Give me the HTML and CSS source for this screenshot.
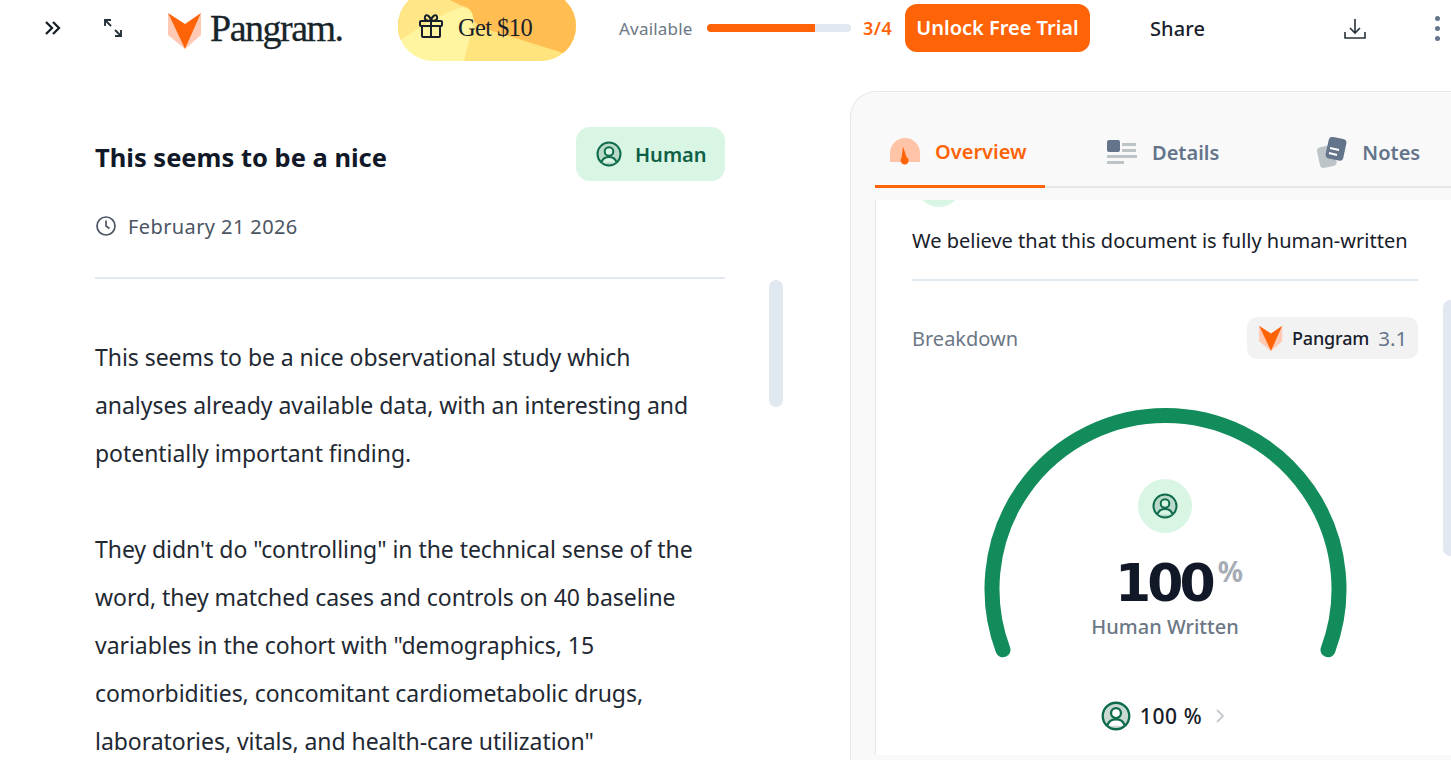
FILE: index.html
```html
<!DOCTYPE html>
<html lang="en">
    <head>
        <meta charset="UTF-8" />
        <meta name="viewport" content="width=device-width, initial-scale=1.0" />
        <title>Pangram</title>
        <link rel="stylesheet" href="styles.css">
    </head>
    <body>
        <header class="topbar">
            <svg class="icon-collapse" width="18" height="18" viewBox="0 0 18 18" fill="none" stroke="#17202a" stroke-width="2.300"><path d="M2 3l6 6-6 6M9 3l6 6-6 6"/></svg>
            <svg class="icon-expand" width="20" height="20" viewBox="0 0 20 20" fill="none" stroke="#26323a" stroke-width="1.900"><path d="M2 8V2h6M2 2l6 6M18 12v6h-6M18 18l-6-6"/></svg>
            <a class="logo">
                <svg width="34" height="37" viewBox="0 0 34 37"><path d="M0 1v22l17 14z" fill="#ffc9b3"/><path d="M33 1v22L17 37z" fill="#ffc9b3"/><path d="M0 1l17 11L33 1 17 37z" fill="#ff6308"/></svg>
                <span class="logo-name">Pangram.</span>
            </a>
            <a class="gift">
                <svg class="gift-bg" width="178" height="70" viewBox="0 0 178 70"><rect width="178" height="70" fill="#fff4a0"/><path d="M66 70L76 30Q76 16 60 16Q50 16 0 50V0H178V70z" fill="#ffe47d"/><path d="M0 50Q50 16 60 15Q74 13 76 30L82 36 178 66V0H0z" fill="#ffbd52"/><path d="M0 50V20Q4 5 20 0H34L66 16Q50 18 0 50z" fill="#ffe788"/></svg>
                <svg class="gift-icon" width="26" height="26" viewBox="0 0 26 26" fill="none" stroke="#17202a" stroke-width="2"><rect x="2" y="8" width="22" height="5" rx="1"/><path d="M4 13v10a1 1 0 0 0 1 1h16a1 1 0 0 0 1-1V13M13 8v16M13 8C8 8 6 6 7 3.500S12 2 13 8zM13 8c5 0 7-2 6-4.500S14 2 13 8z"/></svg>
                <span>Get $10</span>
            </a>
            <span class="avail-label">Available</span>
            <div class="avail-bar"><div class="avail-fill" style="width: 75%"></div></div>
            <span class="avail-count">3/4</span>
            <button class="unlock">Unlock Free Trial</button>
            <span class="share">Share</span>
            <svg class="icon-download" width="24" height="24" viewBox="0 0 24 24" fill="none" stroke="#26323a" stroke-width="1.600"><path d="M12 2v14M7 11l5 5 5-5M2 15v6h20v-6"/></svg>
            <div class="dots"><i></i><i></i><i></i></div>
        </header>

        <main class="content">
            <section class="doc">
                <div class="doc-head">
                    <h1>This seems to be a nice</h1>
                    <div class="verdict">
                        <svg width="26" height="26" viewBox="0 0 26 26" fill="none" stroke="#0d6b4b" stroke-width="2"><circle cx="13" cy="13" r="11.500" fill="#b9d9c9"/><circle cx="13" cy="10.500" r="4.300" fill="#d9f5e4"/><path d="M5.500 21.500c1-4 4-5.500 7.500-5.500s6.500 1.500 7.500 5.500" fill="#d9f5e4"/></svg>
                        <span>Human</span>
                    </div>
                </div>
                <div class="doc-date">
                    <svg width="22" height="22" viewBox="0 0 22 22" fill="none" stroke="#4b5563" stroke-width="1.700"><circle cx="11" cy="11" r="9"/><path d="M11 5.500V11l3.500 2.500"/></svg>
                    <span>February 21 2026</span>
                </div>
                <div class="doc-rule"></div>
                <div class="doc-text">
                    <p>This seems to be a nice observational study which<br>analyses already available data, with an interesting and<br>potentially important finding.</p>
                    <p>They didn't do "controlling" in the technical sense of the<br>word, they matched cases and controls on 40 baseline<br>variables in the cohort with "demographics, 15<br>comorbidities, concomitant cardiometabolic drugs,<br>laboratories, vitals, and health-care utilization"</p>
                </div>
                <div class="doc-thumb"></div>
            </section>

            <aside class="panel">
                <nav class="tabs">
                    <a class="tab tab-on">
                        <svg width="30" height="28" viewBox="0 0 30 28"><path d="M0 24V15a15 15 0 0 1 30 0v9z" fill="#ffc4a8"/><path d="M13 8.500l3.500 10.500a4 4 0 1 1-5 1z" fill="#ff6308"/></svg>
                        <span>Overview</span>
                    </a>
                    <a class="tab tab-details">
                        <svg width="30" height="25" viewBox="0 0 30 25"><rect width="13" height="12" y="0" rx="2" fill="#64748b"/><path d="M15 3h14v3H15zM15 9h14v3H15zM0 15h30v3H0z" fill="#bcc4c8"/><rect y="21" width="17" height="3" fill="#bcc4c8"/></svg>
                        <span>Details</span>
                    </a>
                    <a class="tab tab-notes">
                        <svg width="30" height="31" viewBox="0 0 30 31"><rect x="1" y="9" width="17" height="21" rx="4" fill="#bcc4c8" transform="rotate(-12 10 18)"/><rect x="10" y="1" width="18" height="22" rx="4" fill="#64748b" transform="rotate(12 20 12)"/><path d="M13 11l9 2M12 16l8 2" stroke="#fff" stroke-width="2"/></svg>
                        <span>Notes</span>
                    </a>
                </nav>
                <div class="card">
                    <div class="card-peek"></div>
                    <p class="card-lead">We believe that this document is fully human-written</p>
                    <div class="card-rule"></div>
                    <div class="breakdown">
                        <span class="breakdown-label">Breakdown</span>
                        <div class="model-chip">
                            <svg width="24" height="26" viewBox="0 0 34 37"><path d="M0 1v22l17 14z" fill="#ffc9b3"/><path d="M33 1v22L17 37z" fill="#ffc9b3"/><path d="M0 1l17 11L33 1 17 37z" fill="#ff6308"/></svg>
                            <span class="model-name">Pangram</span>
                            <span class="model-ver">3.1</span>
                        </div>
                    </div>
                    <div class="gauge">
                        <svg class="gauge-arc" width="364" height="252" viewBox="0 0 364 252" fill="none"><path d="M20 241.800A173.500 173.500 0 1 1 345 241.800" stroke="#128c5b" stroke-width="15" stroke-linecap="round"/></svg>
                        <div class="gauge-mid">
                            <div class="gauge-badge">
                                <svg width="26" height="26" viewBox="0 0 26 26" fill="none" stroke="#0d6b4b" stroke-width="2"><circle cx="13" cy="13" r="11.500" fill="#b9d9c9"/><circle cx="13" cy="10.500" r="4.300" fill="#d9f5e4"/><path d="M5.500 21.500c1-4 4-5.500 7.500-5.500s6.500 1.500 7.500 5.500" fill="#d9f5e4"/></svg>
                            </div>
                            <div class="gauge-num">100<sup>%</sup></div>
                            <div class="gauge-cap">Human Written</div>
                        </div>
                    </div>
                    <div class="score-row">
                        <svg width="30" height="30" viewBox="0 0 26 26" fill="none" stroke="#0d6b4b" stroke-width="2"><circle cx="13" cy="13" r="11.500" fill="#c9d9d2"/><circle cx="13" cy="10.500" r="4.300" fill="#fff"/><path d="M5.500 21.500c1-4 4-5.500 7.500-5.500s6.500 1.500 7.500 5.500" fill="#fff"/></svg>
                        <span class="score-val">100 %</span>
                        <svg width="12" height="16" viewBox="0 0 12 16" fill="none" stroke="#c4c9ce" stroke-width="1.800"><path d="M3 2l6 6-6 6"/></svg>
                    </div>
                </div>
                <div class="panel-thumb"></div>
            </aside>
        </main>
    </body>
</html>
```

FILE: styles.css
```css
html, body {
    margin: 0;
    height: 760px;
    overflow: hidden;
    background: #fff;
}
body {
    font-family: "Noto Sans", "Open Sans", sans-serif;
    color: #17202a;
}

/* top bar */
.topbar {
    display: flex;
    align-items: center;
    height: 61px;
    padding-bottom: 5px;
    box-sizing: border-box;
}
.icon-collapse {
    margin-left: 44px;
}
.icon-expand {
    margin-left: 41px;
}
.logo {
    display: flex;
    align-items: center;
    margin-left: 45px;
    margin-top: 5px;
    width: 230px;
}
.logo-name {
    font-family: "Liberation Serif", serif;
    font-size: 38px;
    letter-spacing: -1.500px;
    margin-left: 8px;
    margin-top: -6px;
    color: #17252a;
    -webkit-text-stroke: 0.3px #17252a;
}
.gift {
    position: relative;
    display: flex;
    align-items: center;
    align-self: flex-end;
    width: 178px;
    height: 70px;
    margin-bottom: -5px;
    border-radius: 35px;
    overflow: hidden;
    font-family: "Liberation Serif", serif;
    font-size: 24.500px;
    letter-spacing: -0.600px;
}
.gift-bg {
    position: absolute;
    left: 0;
    top: 0;
}
.gift-icon, .gift span {
    position: relative;
}
.gift-icon {
    margin-left: 20px;
}
.gift span {
    margin-left: 14px;
    margin-top: 3px;
}
.avail-label {
    margin-left: 43px;
    font-size: 17px;
    letter-spacing: 0.200px;
    color: #6b7785;
    width: 88px;
}
.avail-bar {
    width: 144px;
    height: 8px;
    border-radius: 4px;
    background: #e2e8f0;
    overflow: hidden;
}
.avail-fill {
    height: 100%;
    background: #ff6308;
}
.avail-count {
    margin-left: 12px;
    font-size: 18px;
    letter-spacing: 0.500px;
    font-weight: 600;
    color: #ff6308;
    width: 42px;
}
.unlock {
    width: 185px;
    height: 48px;
    margin-top: -1px;
    border: 0;
    border-radius: 12px;
    background: #ff6308;
    color: #fff;
    font-family: inherit;
    font-size: 20px;
    font-weight: 600;
    white-space: nowrap;
    padding: 0;
}
.share {
    margin-left: 60px;
    font-size: 20px;
    letter-spacing: 0.100px;
    font-weight: 500;
    width: 193px;
}
.icon-download {
    margin-top: 1px;
}
.dots {
    display: flex;
    flex-direction: column;
    gap: 5px;
    margin-left: 68px;
}
.dots i {
    width: 5px;
    height: 5px;
    border-radius: 50%;
    background: #64748b;
}

/* layout */
.content {
    display: flex;
    align-items: flex-start;
    height: 699px;
    overflow: hidden;
}

/* document */
.doc {
    position: relative;
    width: 630px;
    margin-left: 95px;
    padding-top: 66px;
}
.doc-head {
    display: flex;
    justify-content: space-between;
    align-items: center;
}
.doc-head h1 {
    margin: 5px 0 0;
    font-size: 25.500px;
    font-weight: 700;
    color: #111827;
}
.verdict {
    display: flex;
    align-items: center;
    gap: 13px;
    width: 149px;
    height: 54px;
    box-sizing: border-box;
    padding-left: 20px;
    border-radius: 14px;
    background: #d9f5e4;
    color: #0d5f45;
    font-size: 20px;
    font-weight: 600;
}
.doc-date {
    display: flex;
    align-items: center;
    gap: 11px;
    margin-top: 32px;
    height: 26px;
    font-size: 20px;
    letter-spacing: 0.400px;
    color: #4b5563;
}
.doc-rule {
    height: 2px;
    margin-top: 38px;
    background: #e2e8f0;
}
.doc-text {
    padding-top: 54px;
    font-size: 23px;
    letter-spacing: -0.050px;
    line-height: 48px;
    color: #1f2933;
    white-space: nowrap;
}
.doc-text p {
    margin: 0 0 48px;
}
.doc-thumb {
    position: absolute;
    left: 674px;
    top: 219px;
    width: 14px;
    height: 127px;
    border-radius: 7px;
    background: #e2e8f0;
}

/* right panel */
.panel {
    position: relative;
    flex: 1;
    height: 700px;
    margin-top: 30px;
    margin-left: 125px;
    box-sizing: border-box;
    padding-left: 24px;
    border: 1px solid #e5e7eb;
    border-right: 0;
    border-radius: 26px 0 0 0;
    background: #f9f9f9;
    overflow: hidden;
}
.tabs {
    display: flex;
    height: 96px;
    border-bottom: 2px solid #e5e7eb;
    box-sizing: border-box;
    white-space: nowrap;
}
.tab {
    display: flex;
    align-items: center;
    gap: 15px;
    height: 96px;
    box-sizing: border-box;
    padding-top: 26px;
    padding-bottom: 1px;
    font-size: 20px;
    font-weight: 600;
    color: #64748b;
}
.tab-on {
    width: 170px;
    padding-left: 15px;
    padding-bottom: 0;
    color: #ff6308;
    border-bottom: 3px solid #ff6308;
}
.tab-details {
    margin-left: 62px;
}
.tab-notes {
    margin-left: 98px;
}
.card {
    height: 555px;
    margin-top: 12px;
    border-left: 1px solid #e5e7eb;
    background: #fff;
    overflow: hidden;
    box-sizing: border-box;
    padding-left: 36px;
    width: 576px;
    position: relative;
}
.card-peek {
    position: absolute;
    left: 40px;
    top: -39px;
    width: 46px;
    height: 46px;
    border-radius: 50%;
    background: #d9f5e4;
}
.card-lead {
    margin: 25px 0 0;
    height: 32px;
    font-size: 20px;
    line-height: 32px;
    white-space: nowrap;
}
.card-rule {
    width: 506px;
    height: 2px;
    margin-top: 22px;
    background: #e2e8f0;
}
.breakdown {
    display: flex;
    justify-content: space-between;
    align-items: center;
    width: 506px;
    margin-top: 36px;
}
.breakdown-label {
    font-size: 20px;
    color: #6b7785;
}
.model-chip {
    display: flex;
    align-items: center;
    gap: 9px;
    width: 171px;
    height: 42px;
    box-sizing: border-box;
    padding-left: 12px;
    border-radius: 10px;
    background: #f2f2f2;
}
.model-name {
    font-size: 18px;
    letter-spacing: -0.150px;
    font-weight: 500;
}
.model-ver {
    font-size: 20.500px;
    color: #64748b;
}
.gauge {
    position: relative;
    width: 364px;
    height: 252px;
    margin-top: 49px;
    margin-left: 71px;
}
.gauge-arc {
    position: absolute;
    left: 0;
    top: 0;
}
.gauge-mid {
    display: flex;
    flex-direction: column;
    align-items: center;
    padding-top: 71px;
}
.gauge-badge {
    display: flex;
    align-items: center;
    justify-content: center;
    width: 54px;
    height: 54px;
    border-radius: 50%;
    background: #d9f5e4;
}
.gauge-num {
    margin-top: 21px;
    height: 56px;
    font-family: "DejaVu Sans", sans-serif;
    font-size: 52px;
    letter-spacing: -4px;
    font-weight: 700;
    line-height: 59px;
    color: #111827;
    position: relative;
    left: 14px;
}
.gauge-num sup {
    margin-left: 6px;
    font-family: "Noto Sans", sans-serif;
    letter-spacing: 0;
    font-size: 28px;
    font-weight: 700;
    color: #a6adb5;
    vertical-align: 19px;
    line-height: 0;
}
.gauge-cap {
    margin-top: 3px;
    font-size: 20px;
    font-weight: 500;
    color: #6b7785;
}
.score-row {
    display: flex;
    align-items: center;
    justify-content: center;
    gap: 9px;
    width: 503px;
    margin-top: 41px;
    font-size: 21px;
    letter-spacing: 0.600px;
    font-weight: 500;
}
.score-row .score-val {
    margin-right: 3px;
}
.panel-thumb {
    position: absolute;
    left: 592px;
    top: 208px;
    width: 14px;
    height: 256px;
    border-radius: 7px;
    background: #e2e8f0;
}
```
